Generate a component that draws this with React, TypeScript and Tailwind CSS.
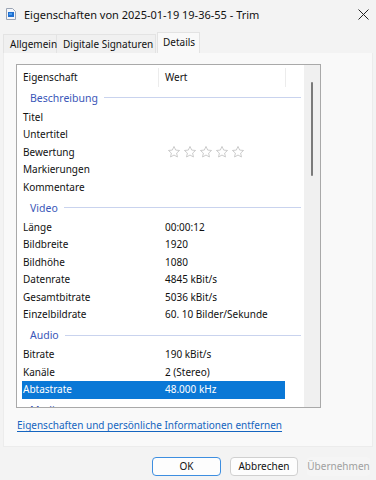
import React from 'react';

type Row = { label: string; value?: string; stars?: boolean; selected?: boolean };
type Group = { title: string; rows: Row[] };

const groups: Group[] = [
  {
    title: 'Beschreibung',
    rows: [
      { label: 'Titel' },
      { label: 'Untertitel' },
      { label: 'Bewertung', stars: true },
      { label: 'Markierungen' },
      { label: 'Kommentare' },
    ],
  },
  {
    title: 'Video',
    rows: [
      { label: 'Länge', value: '00:00:12' },
      { label: 'Bildbreite', value: '1920' },
      { label: 'Bildhöhe', value: '1080' },
      { label: 'Datenrate', value: '4845 kBit/s' },
      { label: 'Gesamtbitrate', value: '5036 kBit/s' },
      { label: 'Einzelbildrate', value: '60. 10 Bilder/Sekunde' },
    ],
  },
  {
    title: 'Audio',
    rows: [
      { label: 'Bitrate', value: '190 kBit/s' },
      { label: 'Kanäle', value: '2 (Stereo)' },
      { label: 'Abtastrate', value: '48.000 kHz', selected: true },
    ],
  },
  {
    title: 'Medien',
    rows: [],
  },
];

const Star = () => (
  <svg width="14" height="14" viewBox="0 0 24 24" className="mr-[2px]">
    <path
      d="M12 2.5l2.9 6.2 6.6.7-5 4.5 1.4 6.6L12 17.2l-5.9 3.3 1.4-6.6-5-4.5 6.6-.7z"
      fill="none"
      stroke="#bcbcbc"
      strokeWidth="1.3"
      strokeLinejoin="round"
    />
  </svg>
);

const FileIcon = () => (
  <svg width="10" height="12" viewBox="0 0 10 12">
    <path d="M0.5 0.5h6l3 3v8h-9z" fill="#f4f6fa" stroke="#9aa4b4" />
    <rect x="2" y="4" width="6" height="5" fill="#1f6fd1" />
    <rect x="3" y="5" width="3" height="2" fill="#4fa0ee" />
  </svg>
);

export default function App() {
  return (
    <div
      className="w-[376px] h-[480px] bg-[#f3f3f3] text-[10px] text-[#111] overflow-hidden"
      style={{ fontFamily: '"Segoe UI", "Noto Sans", "Open Sans", sans-serif' }}
    >
      {/* title bar */}
      <div className="h-[28px] flex items-center pl-[6px] pr-[4px]">
        <FileIcon />
        <span className="ml-[8px] text-[11px] leading-none">
          Eigenschaften von 2025-01-19 19-36-55 - Trim
        </span>
        <div className="flex-1" />
        <svg width="11" height="11" viewBox="0 0 11 11" className="mr-[3px]">
          <path d="M0.5 0.5l10 10M10.5 0.5l-10 10" stroke="#222" strokeWidth="1" />
        </svg>
      </div>

      {/* tabs */}
      <div className="h-[25px] flex items-end pl-[3px]">
        <div className="w-[54px] h-[19px] pl-[6px] flex items-center border border-b-0 border-[#e3e3e3] bg-[#f0f0f0]">
          Allgemein
        </div>
        <div className="w-[99px] h-[19px] pl-[6px] flex items-center border border-b-0 border-l-0 border-[#e3e3e3] bg-[#f0f0f0] whitespace-nowrap">
          Digitale Signaturen
        </div>
        <div className="ml-[1px] w-[43px] h-[21px] pl-[5px] pb-[2px] flex items-center border border-b-0 border-[#e3e3e3] bg-[#f9f9f9]">
          Details
        </div>
      </div>

      {/* panel */}
      <div className="mx-[3px] h-[394px] bg-[#f9f9f9] border border-t-0 border-[#ececec] pt-[11px] pl-[12px]">
        <div className="w-[305px] h-[344px] border border-[#a9a9a9] bg-white flex overflow-hidden">
          <div className="flex-1 overflow-hidden">
            {/* header */}
            <div className="h-[21px] pt-[4px] flex items-center">
              <div className="w-[141px] pl-[6px]">Eigenschaft</div>
              <div className="w-px h-[19px] bg-[#ececec]" />
              <div className="w-[126px] pl-[6px]">Wert</div>
              <div className="w-px h-[19px] bg-[#ececec]" />
            </div>
            {groups.map((g) => (
              <div key={g.title}>
                <div className="h-[22.5px] pt-[1px] flex items-center pl-[13px] pr-[3px]">
                  <span className="text-[#3a56b8] text-[10.5px] leading-[14px]">{g.title}</span>
                  <div className="flex-1 h-px bg-[#c9d3ee] ml-[6px]" />
                </div>
                {g.rows.map((r) => (
                  <div
                    key={r.label}
                    className={`ml-[5px] w-[263px] h-[17.5px] flex items-center whitespace-nowrap ${
                      r.selected ? 'bg-[#0a78d6] text-white' : ''
                    }`}
                  >
                    <div className="w-[143px] pl-[1px]">{r.label}</div>
                    <div className="flex-1 flex items-center">
                      {r.stars ? (
                        <div className="flex pl-[2px]">
                          <Star />
                          <Star />
                          <Star />
                          <Star />
                          <Star />
                        </div>
                      ) : (
                        r.value
                      )}
                    </div>
                  </div>
                ))}
              </div>
            ))}
          </div>
          {/* scrollbar */}
          <div className="w-[16px] bg-[#f0f0f0] flex justify-center pt-[17px]">
            <div className="w-[2px] h-[94px] bg-[#7a7a7a] rounded-full" />
          </div>
        </div>
        <div className="mt-[10px] pl-[1px]">
          <span className="text-[#1565c0] underline underline-offset-2">
            Eigenschaften und persönliche Informationen entfernen
          </span>
        </div>
      </div>

      {/* buttons */}
      <div className="flex justify-end gap-[9px] pr-[6px] mt-[10px]">
        <div className="w-[69px] h-[19px] flex items-center justify-center rounded-[4px] border border-[#3d8ee0] bg-[#fdfdfd]">
          OK
        </div>
        <div className="w-[68px] h-[19px] flex items-center justify-center rounded-[4px] border border-[#d0d0d0] bg-[#fdfdfd]">
          Abbrechen
        </div>
        <div className="w-[63px] h-[19px] flex items-center justify-center rounded-[4px] bg-[#f5f5f5] text-[#a0a0a0]">
          Übernehmen
        </div>
      </div>
    </div>
  );
}
